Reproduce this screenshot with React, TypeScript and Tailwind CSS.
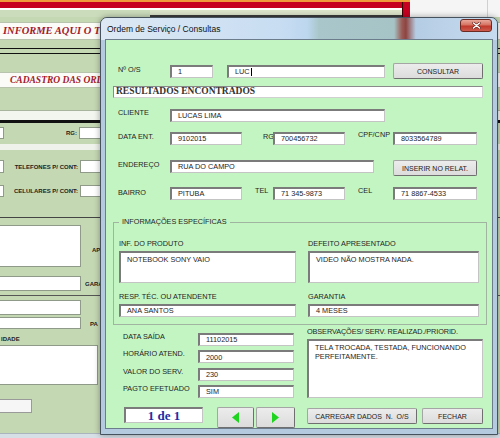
import React from "react"

const sans = "font-['Liberation_Sans',Arial,sans-serif]"
const serif = "font-['Liberation_Serif','Times_New_Roman',serif]"

function Field({ className = "", multi = false, children }: { className?: string; multi?: boolean; children?: React.ReactNode }) {
  return (
    <div
      className={`bg-white border-t-2 border-l-2 border-b border-r border-t-[#7b7b7b] border-l-[#7b7b7b] border-b-[#c4c4c4] border-r-[#c4c4c4] pl-[6px] pr-[4px] text-[7.3px] text-[#1e1e1e] flex ${
        multi ? "items-start pt-[2px] leading-[9px]" : "items-center leading-none whitespace-nowrap"
      } ${className}`}
    >
      {children}
    </div>
  )
}

function Btn({ className = "", children }: { className?: string; children?: React.ReactNode }) {
  return (
    <button
      type="button"
      className={`bg-[linear-gradient(180deg,#ececec_0%,#dcdcdc_100%)] border border-[#a5a5a5] border-r-[#6f6f6f] border-b-[#6f6f6f] rounded-[2px] flex items-center justify-center text-[7px] leading-none text-[#222] whitespace-pre ${className}`}
    >
      {children}
    </button>
  )
}

function Lbl({ className = "", children }: { className?: string; children?: React.ReactNode }) {
  return <span className={`text-[7.3px] leading-[10px] text-[#1e1e1e] whitespace-nowrap ${className}`}>{children}</span>
}

function SideLbl({ className = "", children }: { className?: string; children?: React.ReactNode }) {
  return <span className={`text-[6px] font-bold leading-none text-[#222] whitespace-nowrap ${className}`}>{children}</span>
}

const sheetCell = "bg-white border border-[#8f9a88]"

// planilha ao fundo, quase toda coberta pela janela
function Spreadsheet() {
  return (
    <div className={`flex flex-col ${sans}`}>
      <div className="flex h-[17px]">
        <div className="w-[402px] flex flex-col">
          <div className="h-[2px] bg-[#ef9a3c]" />
          <div className="h-[6px] bg-[#c60020]" />
          <div className="h-[2px] bg-white" />
          <div className="flex-1 flex">
            <div className="w-[150px] bg-[#cbdcbc]" />
            <div className="flex-1 bg-[#dbe3c9] border-b-2 border-[#3c3c3c]" />
          </div>
        </div>
        <div className="w-[8px] flex flex-col">
          <div className="h-[2px] bg-[#ef9a3c]" />
          <div className="flex-1 bg-[#c60020] border-l border-[#3a0000]" />
        </div>
        <div className="flex-1 bg-[#f5f5f5] flex justify-end">
          <div className="w-px h-full bg-[#d0d0d0] mr-[12px]" />
        </div>
      </div>

      <div className="mt-[5px] h-[18px] bg-[#fbfbf8] border-y border-[#b8c4ae] flex items-center">
        <span className={`pl-[3px] text-[10.5px] font-bold italic text-[#a3192c] whitespace-nowrap ${serif}`}>INFORME AQUI O T</span>
      </div>
      <div className="mt-[8px] h-px bg-[#111]" />
      <div className="mt-[4px] h-px bg-[#111]" />

      <div className="mt-[18px] h-[16px] bg-[#fbfbf8] border-y border-[#b8c4ae] flex items-center">
        <span className={`pl-[10px] text-[9.5px] font-bold italic text-[#a3192c] whitespace-nowrap ${serif}`}>CADASTRO DAS ORD</span>
      </div>

      <div className="mt-[22px] h-[10px] bg-[#f3f5ef] border-t border-[#a8b49e]" />
      <div className="h-[3px] bg-[#111]" />

      <div className="mt-[4px] h-[12px] flex items-center">
        <div className={`w-[4px] h-full ${sheetCell} border-l-0`} />
        <div className="w-[75px] flex justify-end pr-[2px]">
          <SideLbl>RG:</SideLbl>
        </div>
        <div className={`w-[60px] h-full ${sheetCell}`} />
      </div>

      <div className="mt-[5px] h-[6px] bg-[#eef2ea]" />

      <div className="mt-[10px] h-[13px] flex items-center">
        <div className={`w-[4px] h-full ${sheetCell} border-l-0`} />
        <div className="w-[76px] flex justify-end pr-[2px]">
          <SideLbl>TELEFONES P/ CONT:</SideLbl>
        </div>
        <div className={`w-[60px] h-full ${sheetCell}`} />
      </div>

      <div className="mt-[12px] h-[12px] flex items-center">
        <div className={`w-[4px] h-full ${sheetCell} border-l-0`} />
        <div className="w-[76px] flex justify-end pr-[2px]">
          <SideLbl>CELULARES P/ CONT:</SideLbl>
        </div>
        <div className={`w-[60px] h-full ${sheetCell}`} />
      </div>

      <div className="mt-[20px] h-px bg-[#444]" />

      <div className="mt-[7px] h-[42px] flex">
        <div className={`w-[81px] h-full ${sheetCell} border-l-0`} />
        <SideLbl className="ml-[11px] mt-[22px]">AP</SideLbl>
      </div>

      <div className="mt-[9px] h-[15px] flex">
        <div className={`w-[81px] h-full ${sheetCell} border-l-0`} />
        <SideLbl className="ml-[4px] mt-[5px]">GARA</SideLbl>
      </div>

      <div className="mt-[4px] h-px bg-[#555]" />

      <div className="mt-[4px] h-[15px] flex">
        <div className={`w-[81px] h-full ${sheetCell} border-l-0`} />
      </div>

      <div className="mt-[2px] h-[12px] flex">
        <div className={`w-[81px] h-full ${sheetCell} border-l-0`} />
        <SideLbl className="ml-[9px] mt-[4px]">PA</SideLbl>
      </div>

      <div className="mt-[6px] h-[8px] flex items-center">
        <SideLbl className="pl-px">IDADE</SideLbl>
      </div>

      <div className={`mt-[2px] h-[40px] w-[98px] ${sheetCell} border-l-0`} />

      <div className="mt-[14px] h-[14px] w-[32px] bg-[#f6f6f6] border border-[#9a9a9a] border-l-0" />

      <div className="mt-[20px] h-[7px] bg-[#d6dee6] border-t border-[#aab4bf]" />
    </div>
  )
}

function ArrowBtn({ dir, className = "" }: { dir: "left" | "right"; className?: string }) {
  return (
    <Btn className={className}>
      <svg width="7" height="11" viewBox="0 0 7 11">
        {dir === "left" ? <polygon points="7,0 0,5.5 7,11" fill="#1fd41f" /> : <polygon points="0,0 7,5.5 0,11" fill="#1fd41f" />}
      </svg>
    </Btn>
  )
}

function ConsultaWindow() {
  return (
    <div className="absolute left-[100px] top-[17px] w-[398px] h-[418px] rounded-t-[7px] border border-[#46525e] bg-[#b4cadf] shadow-[0_0_6px_rgba(0,0,0,0.35)] flex flex-col">
      <div className="h-[22px] rounded-t-[6px] flex items-start justify-between bg-[linear-gradient(90deg,#dde8f4_0%,#c8ddf2_45%,#bdd7ef_52%,#a9c7ca_55%,#a6c4c6_74%,#9a5a55_76%,#8e4440_77%,#b5cde4_79.5%,#c6dbef_100%)]">
        <span className={`pl-[6px] mt-[6px] text-[8.5px] leading-[10px] text-[#111] ${sans}`}>Ordem de Serviço / Consultas</span>
        <div className="mt-px mr-[5px] w-[32px] h-[13px] rounded-[3px] border border-[#6b2a22] bg-[linear-gradient(180deg,#e9a99b_0%,#d67362_45%,#c0392b_55%,#cc5b4d_100%)] flex items-center justify-center">
          <svg width="9" height="7" viewBox="0 0 9 7">
            <path d="M1.5 1 L7.5 6 M7.5 1 L1.5 6" stroke="#5a1a14" strokeWidth="2.6" strokeLinecap="round" />
            <path d="M1.5 1 L7.5 6 M7.5 1 L1.5 6" stroke="#ffffff" strokeWidth="1.6" strokeLinecap="round" />
          </svg>
        </div>
      </div>

      <div className={`ml-[5px] w-[386px] h-[388px] bg-[#c3f5c3] outline outline-1 outline-[#6c7c8c] flex flex-col ${sans}`}>
        <div className="mt-[23px] h-[16px] flex items-center">
          <Lbl className="w-[64px] pl-[12px] -mt-[2px]">Nº O/S</Lbl>
          <Field className="w-[43px] h-[13px]">1</Field>
          <Field className="ml-[14px] w-[158px] h-[13px]">
            LUC<span className="ml-px w-px h-[8px] bg-black" />
          </Field>
          <Btn className="ml-[8px] w-[90px] h-[16px]">CONSULTAR</Btn>
        </div>

        <div className={`mt-[7px] ml-[7px] w-[370px] h-[12px] bg-white border border-[#8a8a8a] border-r-[#d0d0d0] border-b-[#d0d0d0] flex items-center pl-[2px] text-[9.5px] font-bold leading-none text-[#333] ${serif}`}>
          RESULTADOS ENCONTRADOS
        </div>

        <div className="mt-[11px] h-[13px] flex items-start">
          <Lbl className="w-[64px] pl-[12px] -mt-[1px]">CLIENTE</Lbl>
          <Field className="w-[215px] h-[13px]">LUCAS LIMA</Field>
        </div>

        <div className="mt-[10px] h-[13px] flex items-start">
          <Lbl className="w-[64px] pl-[12px]">DATA ENT.</Lbl>
          <Field className="w-[72px] h-[13px]">9102015</Field>
          <Lbl className="ml-[21px] w-[10px]">RG</Lbl>
          <Field className="w-[72px] h-[13px]">700456732</Field>
          <Lbl className="ml-[13px] w-[35px] -mt-[2px]">CPF/CNP</Lbl>
          <Field className="w-[84px] h-[13px]">8033564789</Field>
        </div>

        <div className="mt-[15px] h-[16px] flex items-start">
          <Lbl className="w-[64px] pl-[12px]">ENDEREÇO</Lbl>
          <Field className="w-[204px] h-[13px]">RUA DO CAMPO</Field>
          <Btn className="ml-[19px] w-[84px] h-[16px]">INSERIR NO RELAT.</Btn>
        </div>

        <div className="mt-[11px] h-[13px] flex items-start">
          <Lbl className="w-[64px] pl-[12px] mt-px">BAIRRO</Lbl>
          <Field className="w-[72px] h-[13px]">PITUBA</Field>
          <Lbl className="ml-[13px] w-[18px] -mt-[1px]">TEL</Lbl>
          <Field className="w-[72px] h-[13px]">71 345-9873</Field>
          <Lbl className="ml-[13px] w-[35px] -mt-[1px]">CEL</Lbl>
          <Field className="w-[84px] h-[13px]">71 8867-4533</Field>
        </div>

        <fieldset className="mt-[17px] ml-[7px] w-[374px] h-[108px] border border-[#a1b3a1]">
          <legend className="ml-[5px] px-[3px] text-[7.3px] leading-[10px] text-[#1e1e1e]">INFORMAÇÕES ESPECÍFICAS</legend>
          <div className="flex">
            <div className="ml-[5px] w-[177px] flex flex-col">
              <Lbl className="mt-[12px] h-[10px]">INF. DO PRODUTO</Lbl>
              <Field multi className="mt-[2px] h-[32px]">NOTEBOOK SONY VAIO</Field>
              <Lbl className="mt-[9px] h-[10px]">RESP. TÉC. OU ATENDENTE</Lbl>
              <Field className="mt-[2px] h-[13px]">ANA SANTOS</Field>
            </div>
            <div className="ml-[12px] w-[171px] flex flex-col">
              <Lbl className="mt-[12px] h-[10px]">DEFEITO APRESENTADO</Lbl>
              <Field multi className="mt-[2px] h-[32px]">VIDEO NÃO MOSTRA NADA.</Field>
              <Lbl className="mt-[9px] h-[10px]">GARANTIA</Lbl>
              <Field className="mt-[2px] h-[13px]">4 MESES</Field>
            </div>
          </div>
        </fieldset>

        <div className="mt-px flex">
          <div className="w-[201px] pt-[7px] flex flex-col gap-[4.3px]">
            {[
              ["DATA SAÍDA", "11102015"],
              ["HORÁRIO ATEND.", "2000"],
              ["VALOR DO SERV.", "230"],
              ["PAGTO EFETUADO", "SIM"],
            ].map(([label, value]) => (
              <div key={label} className="h-[13px] flex items-start">
                <Lbl className="w-[92px] pl-[17px] -mt-[1px]">{label}</Lbl>
                <Field className="w-[96px] h-[13px]">{value}</Field>
              </div>
            ))}
          </div>
          <div className="w-[176px] flex flex-col">
            <Lbl className="mt-px h-[10px] tracking-[-0.1px]">OBSERVAÇÕES/ SERV. REALIZAD./PRIORID.</Lbl>
            <Field multi className="mt-[2px] h-[59px]">TELA TROCADA, TESTADA, FUNCIONANDO PERFEITAMENTE.</Field>
          </div>
        </div>

        <div className="mt-[9px] flex items-start">
          <div className={`ml-[18px] w-[79px] h-[16px] bg-white border-t-2 border-l-2 border-b border-r border-t-[#7b7b7b] border-l-[#7b7b7b] border-b-[#c4c4c4] border-r-[#c4c4c4] flex items-center justify-center text-[13px] font-bold leading-none text-[#1b2ea3] ${serif}`}>
            1 de 1
          </div>
          <ArrowBtn dir="left" className="ml-[14px] w-[37px] h-[21px]" />
          <ArrowBtn dir="right" className="ml-[2px] w-[39px] h-[21px]" />
          <Btn className="ml-[12px] mt-px w-[110px] h-[16px]">CARREGAR DADOS  N.  O/S</Btn>
          <Btn className="ml-[5px] mt-px w-[61px] h-[16px]">FECHAR</Btn>
        </div>
      </div>
    </div>
  )
}

export default function App() {
  return (
    <div className="relative w-[500px] h-[438px] overflow-hidden bg-[#c5d8b4]">
      <Spreadsheet />
      <ConsultaWindow />
    </div>
  )
}
